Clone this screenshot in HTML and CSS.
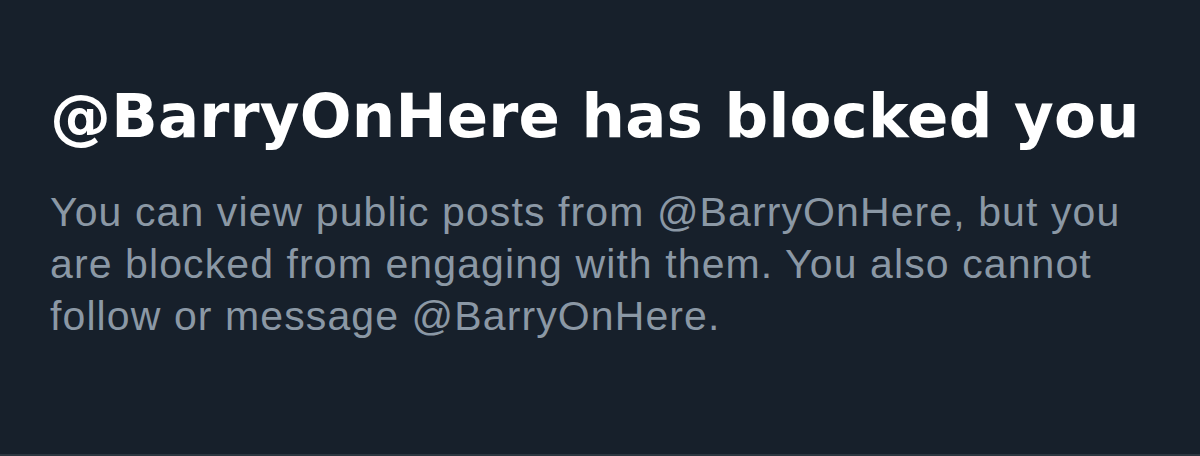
FILE: index.html
```html
<!DOCTYPE html>
<html lang="en">
<head>
<meta charset="utf-8">
<link rel="stylesheet" href="styles.css">
</head>
<body>
<main class="panel">
  <h1 class="title">@BarryOnHere has blocked you</h1>
  <p class="desc">You can view public posts from @BarryOnHere, but you are blocked from engaging with them. You also cannot follow or message @BarryOnHere.</p>
</main>
</body>
</html>
```
FILE: styles.css
```css
html, body {
  margin: 0;
  padding: 0;
  background: #17202b;
}
.panel {
  box-sizing: border-box;
  width: 1200px;
  height: 456px;
  padding: 80px 50px 0 50px;
  border-bottom: 2px solid #2c3640;
}
.title {
  margin: 0;
  color: #ffffff;
  font-family: "DejaVu Sans", sans-serif;
  font-size: 61px;
  font-weight: 700;
  line-height: 72px;
  letter-spacing: 0.2px;
}
.desc {
  margin: 34px 0 0 0;
  width: 1100px;
  color: #8b98a5;
  font-family: "Liberation Sans", Arial, sans-serif;
  font-size: 41px;
  line-height: 52px;
  letter-spacing: 1.1px;
}
```
